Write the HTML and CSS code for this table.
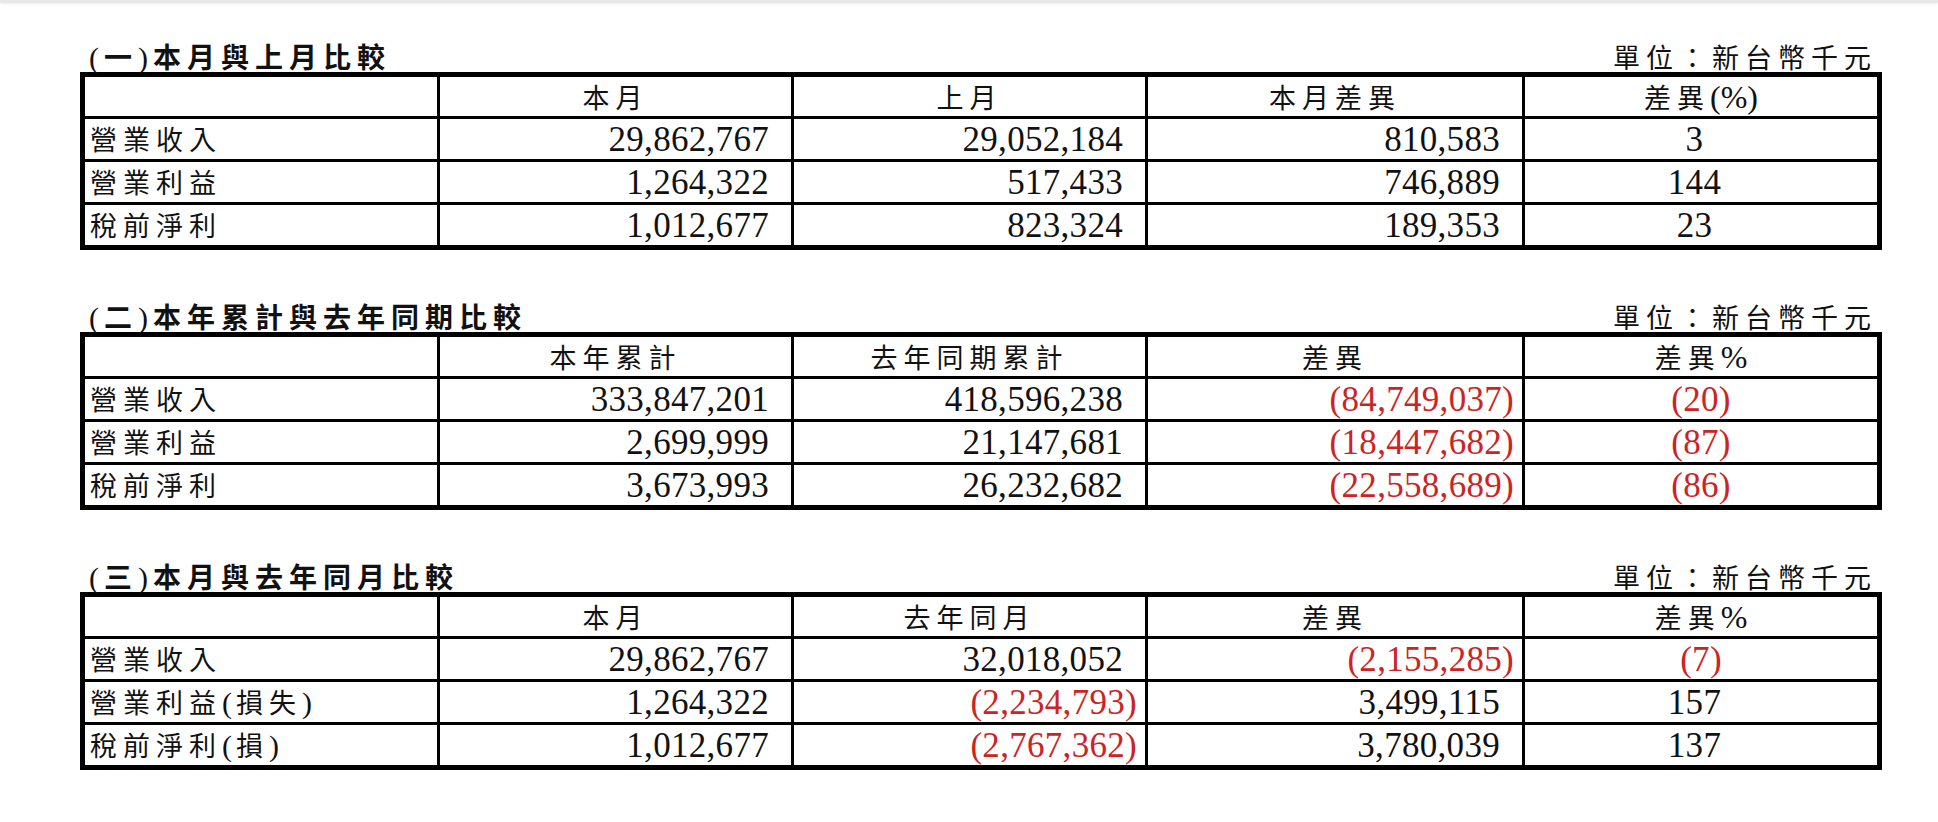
FILE: index.html
```html
<!DOCTYPE html>
<html lang="zh-Hant">
<head>
<meta charset="utf-8">
<title>營運比較</title>
<link rel="stylesheet" href="styles.css">
</head>
<body>
<div class="topbar"></div>
<main class="page">
  <section class="section">
    <div class="head">
      <div class="title"><span class="tp">(</span>一<span class="tp">)</span>本月與上月比較</div>
      <div class="unit">單位：新台幣千元</div>
    </div>
    <table class="grid">
      <colgroup><col class="c1"><col class="c2"><col class="c3"><col class="c4"><col class="c5"></colgroup>
      <tr class="hdr"><td></td><td>本月</td><td>上月</td><td>本月差異</td><td>差異<span class="sym">(%)</span></td></tr>
      <tr><td class="lbl">營業收入</td><td class="num"><span class="pos">29,862,767</span></td><td class="num"><span class="pos">29,052,184</span></td><td class="num"><span class="pos">810,583</span></td><td class="pct"><span class="pos">3</span></td></tr>
      <tr><td class="lbl">營業利益</td><td class="num"><span class="pos">1,264,322</span></td><td class="num"><span class="pos">517,433</span></td><td class="num"><span class="pos">746,889</span></td><td class="pct"><span class="pos">144</span></td></tr>
      <tr><td class="lbl">稅前淨利</td><td class="num"><span class="pos">1,012,677</span></td><td class="num"><span class="pos">823,324</span></td><td class="num"><span class="pos">189,353</span></td><td class="pct"><span class="pos">23</span></td></tr>
    </table>
  </section>

  <section class="section">
    <div class="head">
      <div class="title"><span class="tp">(</span>二<span class="tp">)</span>本年累計與去年同期比較</div>
      <div class="unit">單位：新台幣千元</div>
    </div>
    <table class="grid">
      <colgroup><col class="c1"><col class="c2"><col class="c3"><col class="c4"><col class="c5"></colgroup>
      <tr class="hdr"><td></td><td>本年累計</td><td>去年同期累計</td><td>差異</td><td>差異<span class="sym">%</span></td></tr>
      <tr><td class="lbl">營業收入</td><td class="num"><span class="pos">333,847,201</span></td><td class="num"><span class="pos">418,596,238</span></td><td class="num neg">(84,749,037)</td><td class="pct neg">(20)</td></tr>
      <tr><td class="lbl">營業利益</td><td class="num"><span class="pos">2,699,999</span></td><td class="num"><span class="pos">21,147,681</span></td><td class="num neg">(18,447,682)</td><td class="pct neg">(87)</td></tr>
      <tr><td class="lbl">稅前淨利</td><td class="num"><span class="pos">3,673,993</span></td><td class="num"><span class="pos">26,232,682</span></td><td class="num neg">(22,558,689)</td><td class="pct neg">(86)</td></tr>
    </table>
  </section>

  <section class="section">
    <div class="head">
      <div class="title"><span class="tp">(</span>三<span class="tp">)</span>本月與去年同月比較</div>
      <div class="unit">單位：新台幣千元</div>
    </div>
    <table class="grid">
      <colgroup><col class="c1"><col class="c2"><col class="c3"><col class="c4"><col class="c5"></colgroup>
      <tr class="hdr"><td></td><td>本月</td><td>去年同月</td><td>差異</td><td>差異<span class="sym">%</span></td></tr>
      <tr><td class="lbl">營業收入</td><td class="num"><span class="pos">29,862,767</span></td><td class="num"><span class="pos">32,018,052</span></td><td class="num neg">(2,155,285)</td><td class="pct neg">(7)</td></tr>
      <tr><td class="lbl">營業利益<span class="par">(</span>損失<span class="par">)</span></td><td class="num"><span class="pos">1,264,322</span></td><td class="num neg">(2,234,793)</td><td class="num"><span class="pos">3,499,115</span></td><td class="pct"><span class="pos">157</span></td></tr>
      <tr><td class="lbl">稅前淨利<span class="par">(</span>損<span class="par">)</span></td><td class="num"><span class="pos">1,012,677</span></td><td class="num neg">(2,767,362)</td><td class="num"><span class="pos">3,780,039</span></td><td class="pct"><span class="pos">137</span></td></tr>
    </table>
  </section>
</main>
</body>
</html>
```

FILE: styles.css
```css
html, body {
  margin: 0;
  padding: 0;
  background: #ffffff;
}

body {
  color: #111111;
  font-family: "Liberation Serif", "Noto Sans CJK TC", serif;
}

.topbar {
  height: 3px;
  background: #e8e8e8;
  box-shadow: 0 1px 3px rgba(0, 0, 0, 0.08);
}

.page {
  padding: 43px 0 0 80px;
  width: 1802px;
}

.section + .section {
  margin-top: 56px;
}

.head {
  display: flex;
  justify-content: space-between;
  align-items: flex-end;
  height: 26px;
}

.title {
  font-family: "Liberation Serif", "Noto Sans CJK TC", serif;
  font-weight: 700;
  font-size: 28px;
  line-height: 26px;
  letter-spacing: 6px;
  padding-left: 9px;
  white-space: nowrap;
}

.title .tp {
  font-weight: 400;
  font-size: 30px;
  letter-spacing: 5px;
}

.unit {
  font-family: "Liberation Serif", "Noto Sans CJK TC", serif;
  font-size: 27px;
  line-height: 26px;
  letter-spacing: 6px;
  padding-right: 5px;
  white-space: nowrap;
}

.grid {
  width: 1802px;
  table-layout: fixed;
  border-collapse: separate;
  border-spacing: 0;
  border: 5px solid #000000;
}

.c1 { width: 355px; }
.c2 { width: 354px; }
.c3 { width: 354px; }
.c4 { width: 377px; }
.c5 { width: 352px; }

.grid td {
  box-sizing: border-box;
  height: 43px;
  padding: 0 0 2px 0;
  border-right: 3px solid #000000;
  border-bottom: 3px solid #000000;
  vertical-align: bottom;
  white-space: nowrap;
  font-size: 27px;
  line-height: 32px;
  letter-spacing: 6px;
}

.grid td:last-child {
  border-right: none;
}

.grid tr:last-child td {
  border-bottom: none;
  height: 40px;
}

.grid tr.hdr td {
  height: 42px;
  text-align: center;
  padding-bottom: 1px;
}

.grid td.lbl {
  padding-left: 5px;
  text-align: left;
}

.sym {
  font-size: 32px;
  letter-spacing: 0;
}

.par {
  font-size: 30px;
  letter-spacing: 4px;
}

.grid td.num,
.grid td.pct {
  font-family: "Liberation Serif", serif;
  font-size: 35px;
  letter-spacing: 0.3px;
  padding-bottom: 3px;
}

.grid td.num {
  text-align: right;
  padding-right: 8px;
}

.grid td.pct {
  text-align: center;
}

.pos {
  display: inline-block;
  padding-right: 14px;
}

.grid td.pct .pos {
  padding-right: 13px;
}

.neg {
  color: #cc2424;
}
```
